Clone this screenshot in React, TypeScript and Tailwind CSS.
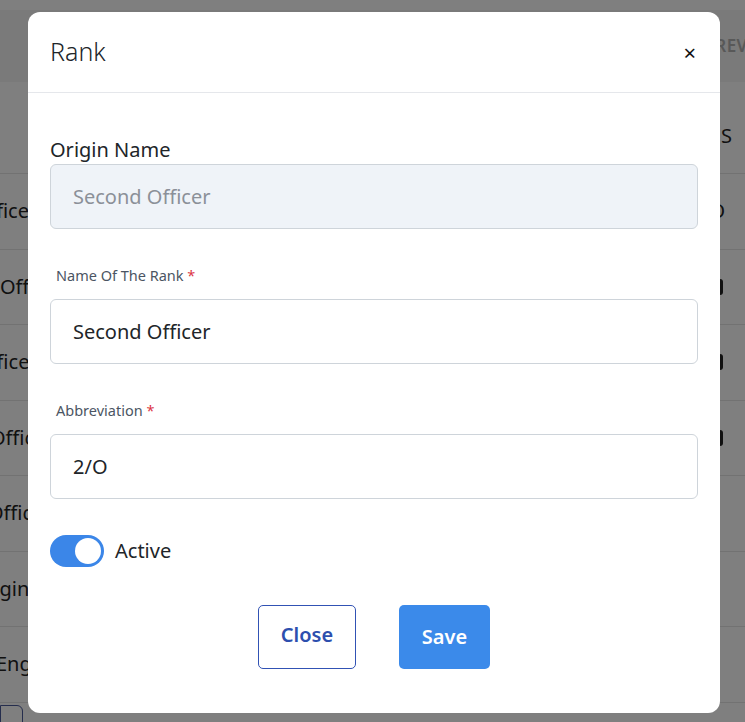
import { useState } from 'react'

const rows = [
  { name: 'Chief Officer', shift: 'ml-[-80px]', mark: 'o' },
  { name: 'Officer', shift: 'ml-[0px]', mark: 'dot' },
  { name: 'Third Officer', shift: 'ml-[-80px]', mark: 'dot' },
  { name: 'Officer', shift: 'ml-[-10px]', mark: 'dot' },
  { name: 'Officer', shift: 'ml-[-12px]', mark: 'none' },
  { name: 'Engineer', shift: 'ml-[-24px]', mark: 'none' },
  { name: 'Engineer', shift: 'ml-[-4px]', mark: 'none' },
]

function Background() {
  return (
    <div className="h-[722px] w-full overflow-hidden bg-white">
      <div className="mt-[10px] flex h-[72px] items-center justify-end bg-[#f4f4f4]">
        <span className="mr-[-36px] text-[17px] font-semibold tracking-wide text-[#b0b0b0]">PREVIEW</span>
      </div>
      <div className="flex h-[92px] items-end justify-end border-b border-[#e4e4e4] pb-[22px]">
        <span className="mr-[13px] text-[20px] text-[#222]">ACTIONS</span>
      </div>
      {rows.map((r, i) => (
        <div key={i} className="flex h-[75.5px] items-center justify-between border-b border-[#e4e4e4]">
          <span className={`${r.shift} whitespace-nowrap text-[20px] text-[#222]`}>{r.name}</span>
          {r.mark === 'o' && <span className="mr-[20px] text-[20px] text-[#222]">O</span>}
          {r.mark === 'dot' && <span className="mr-[22px] h-[16px] w-[6px] rounded-full bg-[#222]" />}
        </div>
      ))}
      <div className="mt-[2px] h-[30px] w-[23px] rounded-r-[6px] border border-[#4a5a9a]" />
    </div>
  )
}

function Field({ label, value, top }: { label: string; value: string; top: string }) {
  return (
    <div className={top}>
      <label className="block pl-[6px] text-[14.5px] text-[#4b5563]">
        {label} <span className="text-[#dc3545]">*</span>
      </label>
      <input
        readOnly
        value={value}
        className="mt-[12px] h-[65px] w-full rounded-[6px] border border-[#ced4da] bg-white px-[22px] text-[20px] text-[#212529] outline-none"
      />
    </div>
  )
}

export default function App() {
  const [active, setActive] = useState(true)

  return (
    <div className="relative h-[722px] w-[745px] overflow-hidden font-['Noto_Sans',_'Open_Sans',_sans-serif]">
      <Background />
      <div className="absolute inset-0 bg-black/50" />
      <div className="absolute left-[28px] top-[12px] h-[701px] w-[692px] rounded-[12px] bg-white">
        <div className="flex h-[81px] items-center justify-between border-b border-[#e5e7eb] pl-[22px] pr-[24px]">
          <h2 className="text-[25px] font-light text-[#212529]">Rank</h2>
          <button className="text-[22px] leading-none text-[#111]">×</button>
        </div>
        <div className="px-[22px] pt-[42px]">
          <label className="block text-[20px] text-[#212529]">Origin Name</label>
          <input
            readOnly
            value="Second Officer"
            className="mt-[-1px] h-[65px] w-full rounded-[6px] border border-[#ced4da] bg-[#eff3f8] px-[22px] text-[20px] text-[#8b9098] outline-none"
          />
          <Field label="Name Of The Rank" value="Second Officer" top="mt-[36px]" />
          <Field label="Abbreviation" value="2/O" top="mt-[36px]" />
          <div className="mt-[36px] flex items-center gap-[11px]">
            <button
              onClick={() => setActive(!active)}
              className={`flex h-[32px] w-[54px] items-center rounded-full p-[3px] ${active ? 'justify-end bg-[#3b86e8]' : 'justify-start bg-[#d1d5db]'}`}
            >
              <span className="h-[26px] w-[26px] rounded-full bg-white" />
            </button>
            <span className="text-[20px] text-[#212529]">Active</span>
          </div>
          <div className="mt-[38px] flex justify-center gap-[43px]">
            <button className="h-[64px] w-[98px] rounded-[5px] border border-[#3152b4] bg-white pb-[4px] text-[20px] font-semibold text-[#2d4fae]">
              Close
            </button>
            <button className="h-[64px] w-[91px] rounded-[5px] bg-[#3b8aea] text-[20px] font-semibold text-white">
              Save
            </button>
          </div>
        </div>
      </div>
    </div>
  )
}
